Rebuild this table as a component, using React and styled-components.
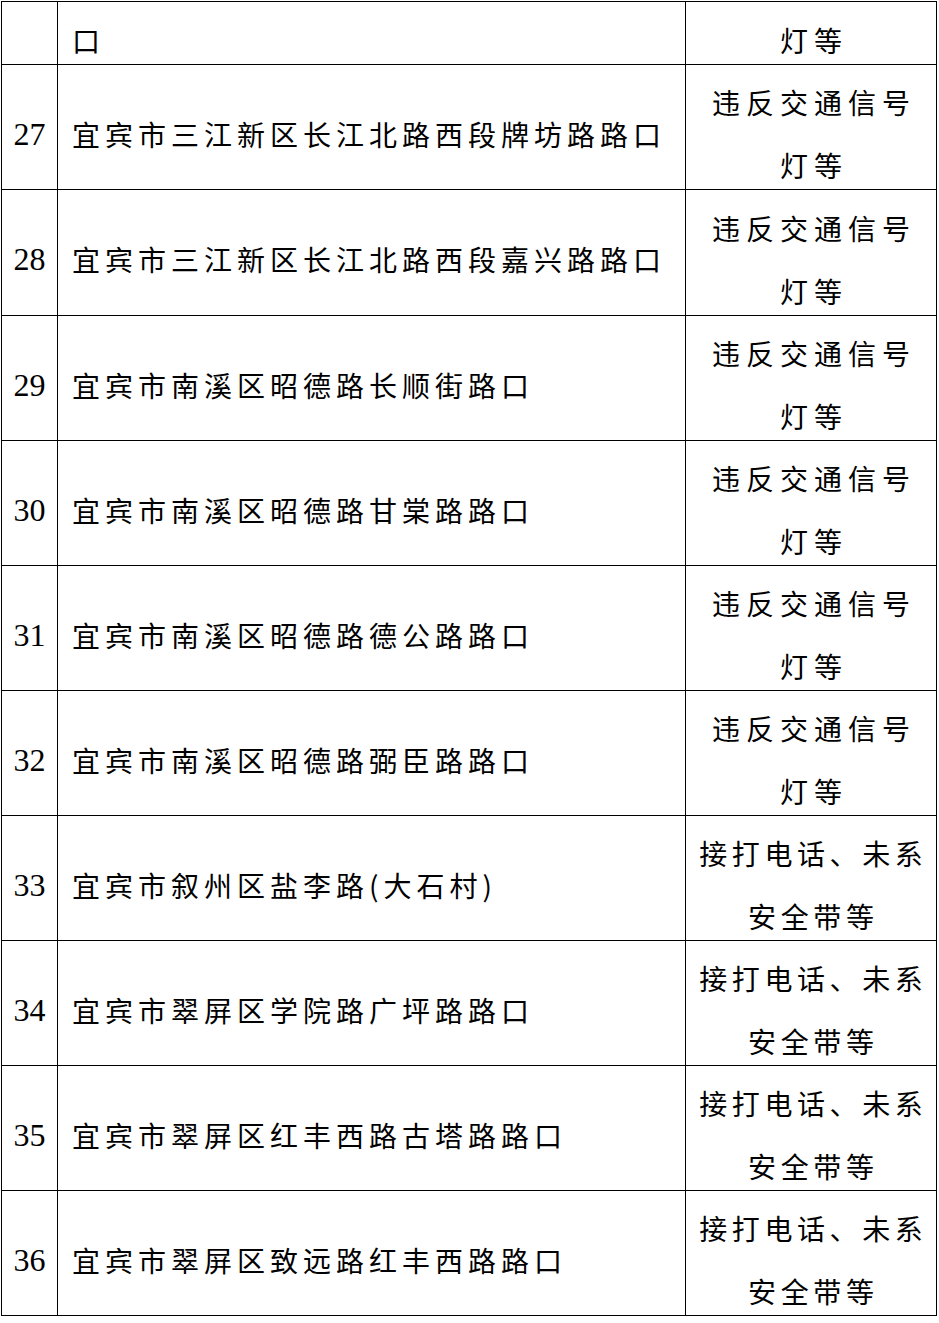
import React from "react";
import styled, { createGlobalStyle } from "styled-components";

const Global = createGlobalStyle`
  html, body { margin: 0; padding: 0; background: #fff; }
  body { font-family: "Noto Sans CJK SC", "Liberation Serif", serif; color: #000; }
`;

const Table = styled.div`
  margin: 1px 0 0 1px;
  width: 936px;
  box-sizing: border-box;
  border-top: 1px solid #000;
  border-left: 1px solid #000;
  display: flex;
  flex-direction: column;
`;

const Row = styled.div`
  display: grid;
  grid-template-columns: 56px 628px 251px;
  height: ${(p) => p.$h}px;
`;

const Cell = styled.div`
  box-sizing: border-box;
  border-right: 1px solid #000;
  border-bottom: 1px solid #000;
  padding-top: 14px;
  display: flex;
  align-items: center;
  min-height: 0;
`;

const NumCell = styled(Cell)`
  justify-content: center;
  font-family: "Liberation Serif", "Times New Roman", serif;
  font-size: 32px;
  line-height: 63px;
`;

const PlaceCell = styled(Cell)`
  padding-left: 14px;
  font-size: 28px;
  letter-spacing: 5px;
  line-height: 63px;
  white-space: nowrap;
`;

const TypeCell = styled(Cell)`
  flex-direction: column;
  justify-content: center;
  font-size: 28px;
  letter-spacing: ${(p) => p.$ls}px;
  padding-left: ${(p) => p.$ls}px;
  line-height: 63px;
  white-space: nowrap;
`;

const Line = styled.div`
  text-align: center;
`;

const A = { lines: ["违反交通信号", "灯等"], ls: 6 };
const B = { lines: ["接打电话、未系", "安全带等"], ls: 4.6 };

const rows = [
  { n: "", place: "口", type: { lines: ["灯等"], ls: 6 }, h: 63 },
  { n: "27", place: "宜宾市三江新区长江北路西段牌坊路路口", type: A, h: 125 },
  { n: "28", place: "宜宾市三江新区长江北路西段嘉兴路路口", type: A, h: 126 },
  { n: "29", place: "宜宾市南溪区昭德路长顺街路口", type: A, h: 125 },
  { n: "30", place: "宜宾市南溪区昭德路甘棠路路口", type: A, h: 125 },
  { n: "31", place: "宜宾市南溪区昭德路德公路路口", type: A, h: 125 },
  { n: "32", place: "宜宾市南溪区昭德路弼臣路路口", type: A, h: 125 },
  { n: "33", place: "宜宾市叙州区盐李路(大石村)", type: B, h: 125 },
  { n: "34", place: "宜宾市翠屏区学院路广坪路路口", type: B, h: 125 },
  { n: "35", place: "宜宾市翠屏区红丰西路古塔路路口", type: B, h: 125 },
  { n: "36", place: "宜宾市翠屏区致远路红丰西路路口", type: B, h: 125 },
];

export default function App() {
  return (
    <>
      <Global />
      <Table>
        {rows.map((r, i) => (
          <Row key={i} $h={r.h}>
            <NumCell>{r.n}</NumCell>
            <PlaceCell>{r.place}</PlaceCell>
            <TypeCell $ls={r.type.ls}>
              {r.type.lines.map((t, j) => (
                <Line key={j}>{t}</Line>
              ))}
            </TypeCell>
          </Row>
        ))}
      </Table>
    </>
  );
}
